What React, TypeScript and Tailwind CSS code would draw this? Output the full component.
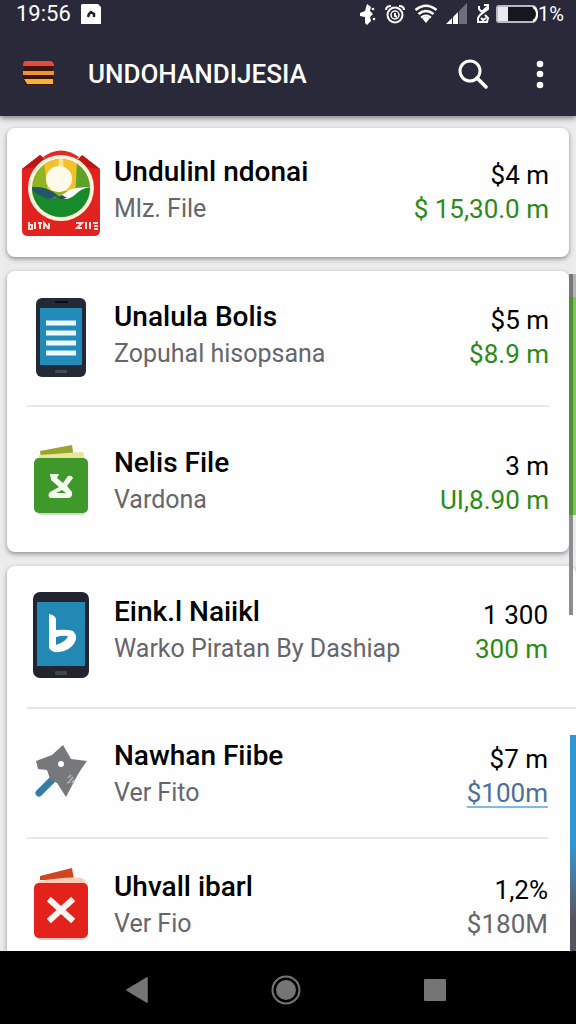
import React from 'react';
import clsx from 'clsx';

type Tone = 'green' | 'blue' | 'gray';

interface RowProps {
  icon: React.ReactNode;
  title: string;
  subtitle: string;
  amount: string;
  total: string;
  tone?: Tone;
  className?: string;
  textClassName?: string;
}

const toneClasses: Record<Tone, string> = {
  green: 'text-[#2c8a17]',
  blue: 'text-[#4a7197]',
  gray: 'text-[#66666a]',
};

const EmblemIcon = () => (
  <svg viewBox="0 0 80 88" className="h-[88px] w-20" aria-hidden="true">
    <path d="M1 20 19 6h42l18 14v61q0 6-6 6H7q-6 0-6-6Z" fill="#e2221f" />
    <path d="M18 5 24 10 62 10 62 5 62 0H18Z" fill="#fff" />
    <path d="M22 8Q40-5 58 8L54 12H26Z" fill="#dc2c28" />
    <path d="m1 20 18-14 4 4-8 8Z" fill="#c01515" />
    <path d="m79 20-18-14-4 4 8 8Z" fill="#c01515" />
    <circle cx="40" cy="39" r="33" fill="#fbf3dc" />
    <clipPath id="emblem">
      <circle cx="40" cy="39" r="29" />
    </clipPath>
    <g clipPath="url(#emblem)">
      <path d="M10 8h60v62H10Z" fill="#8fb524" />
      <path d="M22 8h35l-3 34H27Z" fill="#f4c02c" />
      <path d="M56 8h16v34H55Z" fill="#5da32a" />
      <path d="M38 8h4l1 16h-6Z" fill="#fbe48b" />
      <circle cx="38" cy="30" r="13" fill="#fffbe8" />
      <path d="M8 38q17-2 31 10 14-12 33-10v33H8Z" fill="#178a2b" />
      <path d="M9 39q17-3 28 8-5 4-9 3Q18 48 9 39Z" fill="#24556b" />
      <path d="M28 50q12-2 20-9 8-3 22-3-9 1-14 6-6 6-12 6l-5-3Z" fill="#fff" />
      <path d="m36 48 5-2 5 3-6 1Z" fill="#3b4a4c" />
    </g>
    <g fill="none" stroke="#ffe3df" strokeWidth="2">
      <path d="M8 73v7h3v-4H8M14 73v7M17 74h4m-2 0v6M23 80v-6l5 6m0-6v6M55 74h6l-5 5h5M65 73v7M69 73v7M72 74h5m-4 3h4m-4 3h4" />
    </g>
  </svg>
);

const TabletListIcon = () => (
  <svg viewBox="0 0 52 80" className="h-20 w-[52px]" aria-hidden="true">
    <rect x="1" y="0" width="50" height="79" rx="6" fill="#242936" />
    <path d="M20 4h13" stroke="#090c12" strokeWidth="2" />
    <rect x="5" y="10" width="42" height="57" fill="#238bb9" />
    <path d="M11 25h30M11 35h30M11 45h30M11 55h30" stroke="#e9f9ff" strokeWidth="5" />
    <rect x="20" y="72" width="12" height="3" rx="1" fill="#454951" />
  </svg>
);

const TabletLetterIcon = () => (
  <svg viewBox="0 0 56 86" className="h-[86px] w-14" aria-hidden="true">
    <rect x="0" y="0" width="56" height="86" rx="7" fill="#22252f" />
    <rect x="4" y="10" width="48" height="64" fill="#2388b3" />
    <path d="M16 22q6 1 7 5v11q12-1 17 1 5 5 2 11-5 9-16 10-7 1-10-4Z" fill="#fff" />
    <path d="M23 45q6-2 12-1-1 5-12 9Z" fill="#2388b3" />
    <rect x="22" y="79" width="12" height="4" rx="1" fill="#41454c" />
  </svg>
);

const GreenFolderIcon = () => (
  <svg viewBox="0 0 56 72" className="h-[72px] w-14" aria-hidden="true">
    <path d="M7 7 39 1l2 14H8Z" fill="#9aa32f" />
    <path d="M6 11 49 8q2 0 2 3v6H5Z" fill="#e5e79b" />
    <path d="M2 66q2 5 7 5h39q5 0 6-5Z" fill="#d4d8d0" />
    <rect x="1" y="14" width="54" height="55" rx="5" fill="#3f982a" />
    <path d="M17 30h9l-2 4 6 5 5-7q4-1 5 2l-6 8 5 6q1 5-3 6H17q-3-3 0-6l9-5-8-7Z" fill="#f7fff2" />
    <path d="m23 49 6-3 4 3Z" fill="#3f982a" />
  </svg>
);

const RedFolderIcon = () => (
  <svg viewBox="0 0 56 74" className="h-[74px] w-14" aria-hidden="true">
    <path d="M7 9 39 1l2 12H7Z" fill="#cf451f" />
    <path d="M6 14q30-5 42-3 4 1 5 5l-1 5H4Z" fill="#f9cdb8" />
    <path d="M2 68q2 5 7 5h39q5 0 6-5Z" fill="#ddc6c4" />
    <rect x="1" y="16" width="54" height="55" rx="5" fill="#e3221b" />
    <path d="m18 34 20 18m0-18L18 52" stroke="#fff4f0" strokeWidth="6" strokeLinecap="square" />
  </svg>
);

const StarToolIcon = () => (
  <svg viewBox="0 0 52 54" className="h-[54px] w-[52px]" aria-hidden="true">
    <path d="M18 35 4 49" stroke="#347ca6" strokeWidth="7" strokeLinecap="round" />
    <path d="m28 1 8 14 16 2q-7 9-11 17l-10 19-9-14-7-4-3-9-9-1-2-8 16-6Z" fill="#77787b" />
    <circle cx="26" cy="20" r="3" fill="#fff" />
    <path d="m33 34 3-3m-2 7 4-5m-6 6 3-1m2 1 2-3" stroke="#b4b5b8" strokeWidth="1.500" />
  </svg>
);

const StatusIcons = () => (
  <div className="flex items-center gap-2">
    <svg viewBox="0 0 16 22" className="h-[22px] w-4" fill="#fff" aria-hidden="true">
      <path d="m7 1 4 3-1 4 3 3-3 3 1 4-4 4-2-2v-6l-5-1v-3l5-2Z" />
      <circle cx="13" cy="6" r="1.300" />
      <circle cx="14" cy="16" r="1.300" />
    </svg>
    <svg viewBox="0 0 22 22" className="h-[22px] w-[22px]" fill="none" stroke="#fff" strokeWidth="2" aria-hidden="true">
      <circle cx="11" cy="12" r="7.500" />
      <circle cx="11" cy="12" r="4" strokeWidth="1.500" />
      <path d="M2 7q0-4 5-4M20 7q0-4-5-4M11 10v3l2 1" />
    </svg>
    <svg viewBox="0 0 24 20" className="h-5 w-6" fill="none" stroke="#fff" strokeWidth="2.600" aria-hidden="true">
      <path d="M1.500 6Q12-2.500 22.500 6M4.500 10q7.500-6 15 0" />
      <path d="M8 14q4-3 8 0l-4 5Z" fill="#fff" stroke="none" />
      <path d="M7 13.500q5-4 10 0" strokeWidth="2" />
    </svg>
    <svg viewBox="0 0 22 22" className="h-[22px] w-[22px]" aria-hidden="true">
      <path d="M0 21 6 15v6ZM7 14l5-5v12H7Z" fill="#fff" />
      <path d="m13 8 8-8v21h-8Z" fill="#6f6f7b" />
    </svg>
    <svg viewBox="0 0 14 20" className="h-5 w-3.5" fill="none" stroke="#fff" strokeWidth="2" aria-hidden="true">
      <path d="M3 2v3l3 3 5-5M8 1h4v4L4 11l-2 3v4h9l1-4-3-3M5 14l2 2 3-2" />
    </svg>
  </div>
);

const BatteryIcon = () => (
  <svg viewBox="0 0 42 20" className="h-5 w-[42px]" aria-hidden="true">
    <path d="M3 2h34q4 1 4 8t-4 8H3q-2 0-2-2V4q0-2 2-2Z" fill="#151620" stroke="#b8b8c0" strokeWidth="2" />
    <path d="M2 3h10v14H2Z" fill="#e9e9ef" />
    <path d="M37 3q4 2 4 7t-4 7" fill="none" stroke="#fff" strokeWidth="2" />
  </svg>
);

const Header = () => (
  <header className="relative z-10 bg-[#2a293a] text-white shadow-[0_2px_6px_rgba(0,0,0,0.5)]">
    <div className="flex h-7 items-center justify-between pr-3 pl-4">
      <div className="flex items-center gap-2.5">
        <span className="text-[22px] leading-7">19:56</span>
        <svg viewBox="0 0 20 20" className="h-5 w-5" aria-hidden="true">
          <path d="M1 0h16l3 3v17H0V1Z" fill="#fff" />
          <path d="m7 13 1-3 2-2 3 2v3" fill="none" stroke="#22222d" strokeWidth="2.500" />
        </svg>
      </div>
      <div className="flex items-center gap-1.5">
        <StatusIcons />
        <div className="flex items-center">
          <BatteryIcon />
          <span className="text-[20px] leading-7">1%</span>
        </div>
      </div>
    </div>
    <div className="flex h-[88px] items-center pt-1 pr-5 pl-[22px]">
      <button type="button" aria-label="Menu">
        <svg viewBox="0 0 32 26" className="h-[26px] w-8" aria-hidden="true">
          <path d="M2 3h29v21H3L1 15Z" fill="#3a160b" />
          <path d="M3 0h26q3 1 3 5H1q0-4 2-5Z" fill="#e54a3b" />
          <path d="M1 10h31v4H1Z" fill="#f39231" />
          <path d="M2 18h29v5H5Z" fill="#f7b136" />
        </svg>
      </button>
      <h1 className="ml-[34px] flex-1 text-[26px] leading-9 font-medium">UNDOHANDIJESIA</h1>
      <button type="button" aria-label="Search">
        <svg viewBox="0 0 30 30" className="h-[30px] w-[30px]" fill="none" stroke="#fff" aria-hidden="true">
          <circle cx="12" cy="12" r="10" strokeWidth="3" />
          <path d="m19 19 9 9" strokeWidth="3.500" strokeLinecap="round" />
        </svg>
      </button>
      <button type="button" aria-label="More options" className="ml-9">
        <svg viewBox="0 0 32 30" className="h-[30px] w-8" fill="#fff" aria-hidden="true">
          <circle cx="16" cy="5" r="3.300" />
          <circle cx="16" cy="15" r="3.300" />
          <circle cx="16" cy="26" r="3.300" />
        </svg>
      </button>
    </div>
  </header>
);

const Row: React.FC<RowProps> = ({
  icon,
  title,
  subtitle,
  amount,
  total,
  tone = 'green',
  className,
  textClassName,
}) => (
  <li className={clsx('flex items-center gap-[13px] pl-3.5', className)}>
    <div className="flex w-20 shrink-0 justify-center">{icon}</div>
    <div className={clsx('flex min-w-0 flex-1 justify-between', textClassName)}>
      <div className="whitespace-nowrap">
        <h2 className="text-[28px] leading-9 font-medium text-black">{title}</h2>
        <p className="text-[25px] leading-[38px] text-[#66666a]">{subtitle}</p>
      </div>
      <div className="pt-1 text-right text-[26px] leading-[34px] whitespace-nowrap">
        <p className="text-black">{amount}</p>
        {tone === 'blue' ? (
          <a
            href="#total"
            className={clsx('underline decoration-[#7fbbe0] decoration-2 underline-offset-4', toneClasses[tone])}
          >
            {total}
          </a>
        ) : (
          <p className={toneClasses[tone]}>{total}</p>
        )}
      </div>
    </div>
  </li>
);

const Divider = ({ className }: { className?: string }) => (
  <li role="separator" className={clsx('ml-5 h-0.5 bg-[#e7e8e9]', className)} />
);

const ScrollMarks = () => (
  <div className="absolute top-[158px] right-0 bottom-0 flex w-[7px] flex-col items-end" aria-hidden="true">
    <div className="h-[23px] w-full border-l-4 border-[#77777a] bg-[#b4b4b6]" />
    <div className="h-[218px] w-full border-l-4 border-[#4f8f35] bg-[#7cc653]" />
    <div className="h-[100px] w-full border-l-4 border-[#8d8d8f]" />
    <div className="mt-[120px] w-[6px] flex-1 bg-linear-to-b from-[#2f97d3] from-50% to-[#55555f] to-85%" />
  </div>
);

const NavBar = () => (
  <nav className="flex h-[73px] items-center justify-around bg-black pt-1 pr-[68px] pl-16">
    <button type="button" aria-label="Back">
      <svg viewBox="0 0 24 26" className="h-[26px] w-6" aria-hidden="true">
        <path d="M22 1v24L2 13Z" fill="#757575" stroke="#757575" strokeWidth="1.500" strokeLinejoin="round" />
      </svg>
    </button>
    <button type="button" aria-label="Home">
      <svg viewBox="0 0 30 30" className="h-[30px] w-[30px]" aria-hidden="true">
        <circle cx="15" cy="15" r="13.500" fill="none" stroke="#757575" strokeWidth="2" />
        <circle cx="15" cy="15" r="10" fill="#757575" />
      </svg>
    </button>
    <button type="button" aria-label="Recent apps">
      <svg viewBox="0 0 24 24" className="h-6 w-6" aria-hidden="true">
        <rect x="1" y="1" width="22" height="22" rx="1" fill="#757575" />
      </svg>
    </button>
  </nav>
);

const cardClasses = 'rounded-lg bg-[#fefefe] shadow-[0_2px_5px_rgba(0,0,0,0.4)]';

export default function App() {
  return (
    <div className="flex min-h-screen flex-col bg-[#ececed] font-['Roboto',sans-serif]">
      <Header />
      <main className="relative flex flex-1 flex-col gap-3.5 overflow-hidden pt-3 pl-[7px]">
        <ul className={clsx('mr-[7px]', cardClasses)}>
          <Row
            icon={<EmblemIcon />}
            title="Undulinl ndonai"
            subtitle="Mlz. File"
            amount="$4 m"
            total="$ 15,30.0 m"
            className="h-[129px] pr-5"
            textClassName="pb-1"
          />
        </ul>
        <ul className={clsx('mr-[7px]', cardClasses)}>
          <Row
            icon={<TabletListIcon />}
            title="Unalula Bolis"
            subtitle="Zopuhal hisopsana"
            amount="$5 m"
            total="$8.9 m"
            className="h-[134px] pr-5"
            textClassName="pb-1"
          />
          <Divider className="mr-5" />
          <Row
            icon={<GreenFolderIcon />}
            title="Nelis File"
            subtitle="Vardona"
            amount="3 m"
            total="UI,8.90 m"
            className="h-[145px] pr-5"
            textClassName="pt-1"
          />
        </ul>
        <ul className={clsx('flex-1 rounded-b-none', cardClasses)}>
          <Row
            icon={<TabletLetterIcon />}
            title="Eink.l Naiikl"
            subtitle="Warko Piratan By Dashiap"
            amount="1 300"
            total="300 m"
            className="h-[141px] pr-7 pb-1"
            textClassName="pb-2"
          />
          <Divider />
          <Row
            icon={<StarToolIcon />}
            title="Nawhan Fiibe"
            subtitle="Ver Fito"
            amount="$7 m"
            total="$100m"
            tone="blue"
            className="h-32 pr-7 pb-1"
            textClassName="pt-2"
          />
          <Divider className="mr-7" />
          <Row
            icon={<RedFolderIcon />}
            title="Uhvall ibarl"
            subtitle="Ver Fio"
            amount="1,2%"
            total="$180M"
            tone="gray"
            className="pt-[26px] pr-7 pb-1"
            textClassName="pt-1"
          />
        </ul>
        <ScrollMarks />
      </main>
      <NavBar />
    </div>
  );
}
